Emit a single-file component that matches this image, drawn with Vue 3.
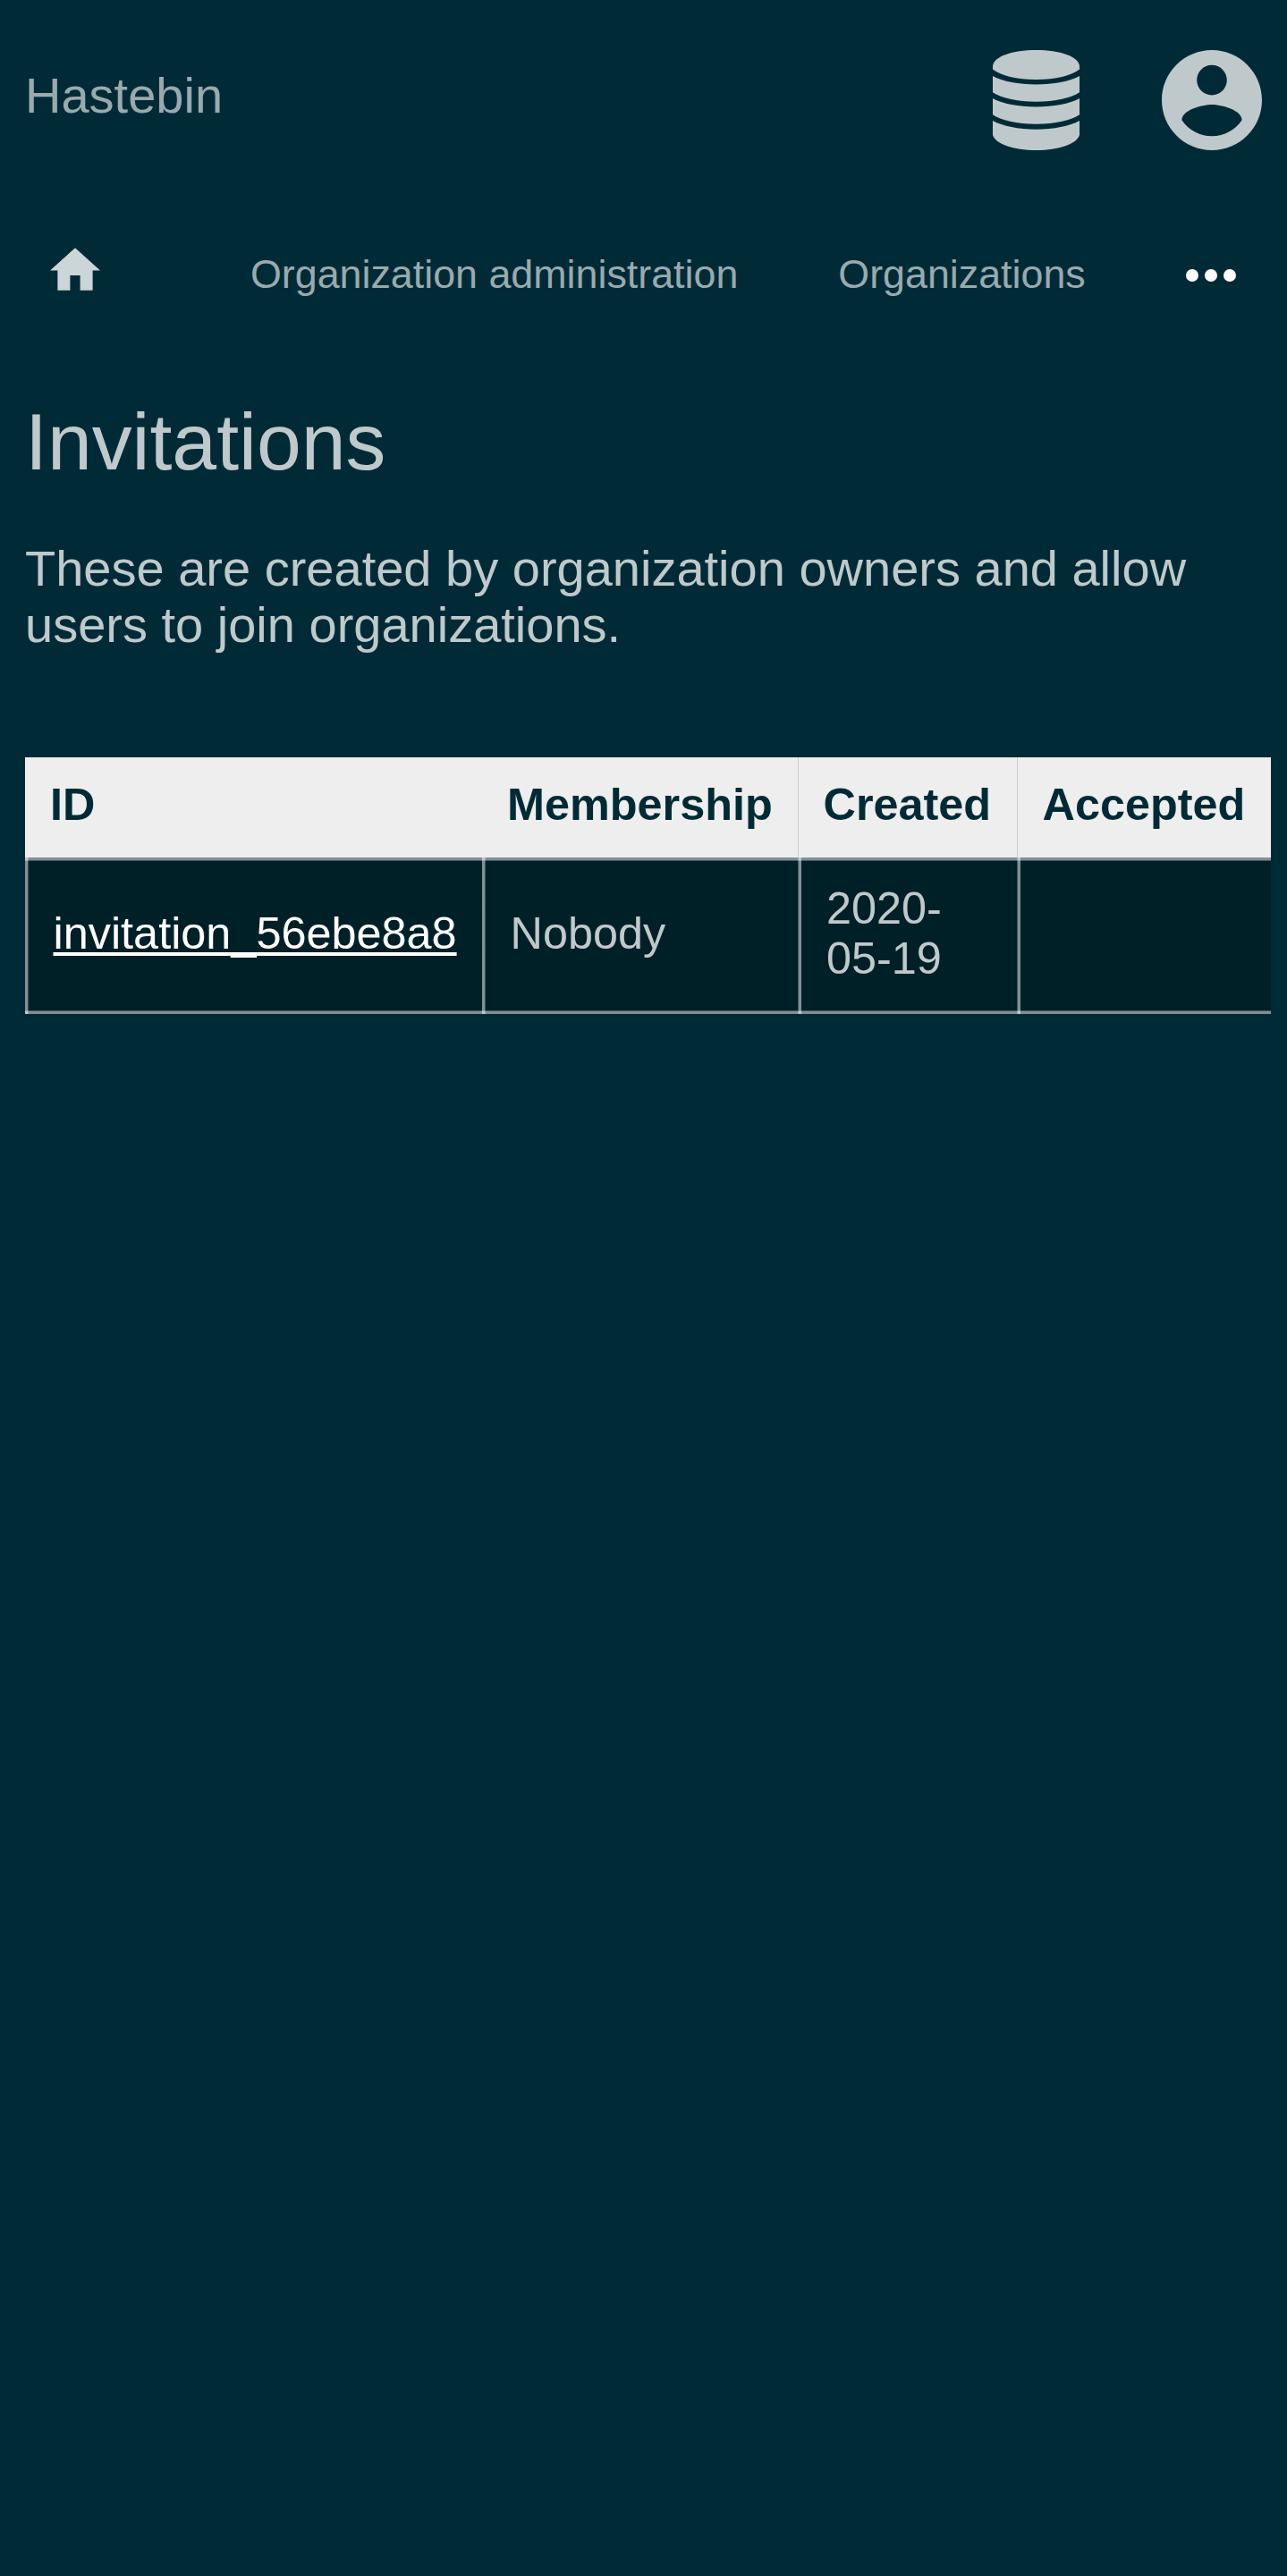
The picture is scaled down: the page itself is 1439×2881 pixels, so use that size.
<script setup>
const columns = ['ID', 'Membership', 'Created', 'Accepted']
const invitations = [
  { id: 'invitation_56ebe8a8', membership: 'Nobody', created: '2020-05-19', accepted: '' },
]
</script>

<template>
  <div class="page">
    <header class="topbar">
      <a class="brand">Hastebin</a>
      <div class="actions">
        <svg class="database" viewBox="0 0 97 112">
          <path d="M0 21.5V18C1 7 22 0 48.5 0S96 7 97 18v3.5C88 28.500 70 33 48.500 33S9 28.500 0 21.500z" />
          <path d="M0 29C11 35 29 38.500 48.500 38.500S86 35 97 29v18.300C88 53.500 70 57.700 48.500 57.700S9 53.500 0 47.300z" />
          <path d="M0 54C11 60 29 63.500 48.500 63.500S86 60 97 54v18.300C88 78.500 70 82.800 48.500 82.800S9 78.500 0 72.300z" />
          <path d="M0 79C11 85 29 88.700 48.500 88.700S86 85 97 79v16C94 105 74 112 48.500 112S3 105 0 95z" />
        </svg>
        <svg class="account" viewBox="2 2 20 20">
          <path d="M12 2C6.480 2 2 6.480 2 12s4.480 10 10 10 10-4.480 10-10S17.520 2 12 2zm0 3c1.660 0 3 1.340 3 3s-1.340 3-3 3-3-1.340-3-3 1.340-3 3-3zm0 14.200c-2.500 0-4.710-1.280-6-3.220.03-1.990 4-3.080 6-3.080 1.990 0 5.970 1.090 6 3.080-1.290 1.940-3.500 3.220-6 3.220z" />
        </svg>
      </div>
    </header>

    <nav class="crumbs">
      <svg class="home" viewBox="2 3 20 17"><path d="M10 20v-6h4v6h5v-8h3L12 3 2 12h3v8z" /></svg>
      <a class="first">Organization administration</a>
      <a>Organizations</a>
      <svg class="more" viewBox="0 0 56 14">
        <circle cx="7" cy="7" r="7" /><circle cx="28" cy="7" r="7" /><circle cx="49" cy="7" r="7" />
      </svg>
    </nav>

    <main>
      <h1>Invitations</h1>
      <p>These are created by organization owners and allow users to join organizations.</p>
      <div class="table">
        <div class="row head">
          <div v-for="c in columns" :key="c" class="cell">{{ c }}</div>
        </div>
        <div v-for="inv in invitations" :key="inv.id" class="row body">
          <div class="cell"><a class="link">{{ inv.id }}</a></div>
          <div class="cell">{{ inv.membership }}</div>
          <div class="cell late"><span class="date">{{ inv.created }}</span></div>
          <div class="cell late">{{ inv.accepted }}</div>
        </div>
      </div>
    </main>
  </div>
</template>

<style>
body {
  margin: 0;
  background: #002b36;
}
</style>

<style scoped>
.page {
  box-sizing: border-box;
  min-height: 2881px;
  padding: 56px 28px 0;
  background: #002b36;
  color: #bfc9cc;
  font: 56px/63px "Liberation Sans", Arial, sans-serif;
}
svg {
  display: block;
  fill: currentColor;
  flex: none;
}
.topbar {
  display: flex;
  justify-content: space-between;
  height: 112px;
}
.brand {
  padding-top: 19px;
  color: #99aaaf;
}
.actions {
  display: flex;
  gap: 92px;
}
.database {
  width: 97px;
  height: 112px;
}
.account {
  width: 112px;
  height: 112px;
}
.crumbs {
  display: flex;
  align-items: flex-start;
  gap: 112px;
  margin-top: 109px;
  padding-left: 28px;
  height: 60px;
  font-size: 44.8px;
  line-height: 52px;
  color: #99aaaf;
  white-space: nowrap;
}
.crumbs a {
  padding-top: 3px;
}
.crumbs .first {
  margin-left: 56px;
}
.home {
  width: 56px;
  height: 48px;
  color: #ccd5d7;
}
.more {
  width: 56px;
  height: 14px;
  margin: 24px 0 0 0.5px;
  color: #fff;
}
h1 {
  margin: 106px 0 58px;
  font-size: 89.6px;
  line-height: 103px;
  font-weight: 400;
}
p {
  margin: 0 0 117px;
}
.table {
  width: 1393px;
  font-size: 50.4px;
  line-height: 56px;
}
.row {
  display: grid;
  grid-template-columns: 511px 353px 245px 284px;
}
.head {
  height: 112px;
  background: #eee;
  color: #002b36;
  font-weight: 700;
}
.head .cell {
  box-sizing: border-box;
  padding: 25px 0 0 28px;
}
.head .cell:nth-child(n + 3) {
  padding-left: 28.5px;
  background: linear-gradient(#c9d0d2, #c9d0d2) left / 1px 100% no-repeat;
}
.body {
  height: 175px;
  background: #002028;
}
.body .cell {
  --line: linear-gradient(rgba(255, 255, 255, 0.5), rgba(255, 255, 255, 0.5));
  --soft: linear-gradient(rgba(255, 255, 255, 0.25), rgba(255, 255, 255, 0.25));
  display: flex;
  align-items: center;
  box-sizing: border-box;
  height: 175px;
  padding: 0 0 5px 31.5px;
  background:
    var(--line) 0 0 / 3px 100% no-repeat,
    var(--soft) 3px 0 / 1px 100% no-repeat,
    var(--line) 0 0 / 100% 3px no-repeat,
    var(--soft) 0 3px / 100% 1px no-repeat,
    var(--soft) 0 171px / 100% 1px no-repeat,
    var(--line) 0 172px / 100% 3px no-repeat;
}
.body .cell.late {
  padding-left: 32px;
  background:
    var(--soft) 0 0 / 1px 100% no-repeat,
    var(--line) 1px 0 / 3px 100% no-repeat,
    var(--line) 0 0 / 100% 3px no-repeat,
    var(--soft) 0 3px / 100% 1px no-repeat,
    var(--soft) 0 171px / 100% 1px no-repeat,
    var(--line) 0 172px / 100% 3px no-repeat;
}
.date {
  width: 180px;
}
.link {
  color: #fff;
  text-decoration: underline;
  text-decoration-thickness: 3.5px;
  text-underline-offset: 3.5px;
  text-decoration-skip-ink: none;
}
</style>
